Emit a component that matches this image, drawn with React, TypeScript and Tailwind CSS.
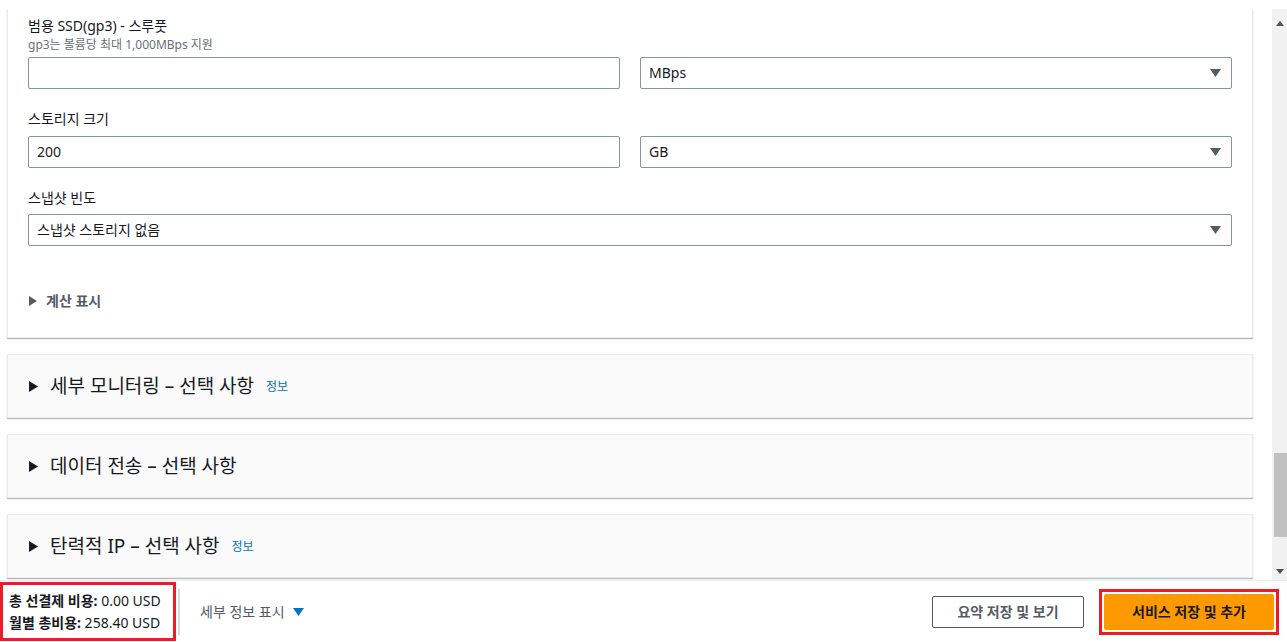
import React from 'react';

const font = { fontFamily: '"Noto Sans", "Noto Sans CJK KR", sans-serif' };

function Caret({ className = '' }: { className?: string }) {
  return (
    <svg width="11" height="8" viewBox="0 0 11 8" className={className}>
      <path d="M0 0 H11 L5.5 8 Z" fill="currentColor" />
    </svg>
  );
}

function RightTri({ className = '' }: { className?: string }) {
  return (
    <svg width="9" height="11" viewBox="0 0 9 11" className={className}>
      <path d="M0 0 L9 5.5 L0 11 Z" fill="currentColor" />
    </svg>
  );
}

function TextInput({ value = '' }: { value?: string }) {
  return (
    <div className="flex h-8 items-center rounded-[2px] border border-[#879596] bg-white px-2 text-sm text-[#16191f]">
      {value}
    </div>
  );
}

function Select({ value }: { value: string }) {
  return (
    <div className="flex h-8 items-center justify-between rounded-[2px] border border-[#879596] bg-white pl-2 pr-[10px] text-sm text-[#16191f]">
      <span>{value}</span>
      <Caret className="text-[#545b64]" />
    </div>
  );
}

function Section({ title, info }: { title: string; info?: boolean }) {
  return (
    <div className="mt-4 flex h-16 items-center border border-[#eaeded] bg-[#fafafa] pl-[21px] shadow-[0_1px_1px_0_rgba(0,28,36,0.3)]">
      <RightTri className="text-[#16191f]" />
      <span className="ml-3 text-[19px] text-[#16191f]">{title}</span>
      {info && <span className="ml-3 mt-[2px] text-xs text-[#0073bb]">정보</span>}
    </div>
  );
}

export default function App() {
  return (
    <div className="flex h-[642px] w-[1287px] flex-col overflow-hidden bg-white" style={font}>
      <div className="h-[9px] shrink-0" />
      <div className="flex h-[571px] shrink-0 overflow-hidden">
        <div className="flex-1 pl-[7px] pr-[19px]">
          <div className="border border-t-0 border-[#eaeded] bg-white px-5 pt-[7px] shadow-[0_1px_1px_0_rgba(0,28,36,0.3)]">
            <div className="text-sm leading-5 text-[#16191f]">범용 SSD(gp3) - 스루풋</div>
            <div className="mt-[1px] text-xs leading-4 text-[#687078]">gp3는 볼륨당 최대 1,000MBps 지원</div>
            <div className="mt-[4px] grid grid-cols-2 gap-5">
              <TextInput />
              <Select value="MBps" />
            </div>

            <div className="mt-5 text-sm leading-5 text-[#16191f]">스토리지 크기</div>
            <div className="mt-[7px] grid grid-cols-2 gap-5">
              <TextInput value="200" />
              <Select value="GB" />
            </div>

            <div className="mt-5 text-sm leading-5 text-[#16191f]">스냅샷 빈도</div>
            <div className="mt-[6px]">
              <Select value="스냅샷 스토리지 없음" />
            </div>

            <div className="mt-[45px] flex h-5 items-center text-sm font-bold text-[#545b64]">
              <RightTri className="ml-px h-[10px] w-[8px]" />
              <span className="ml-[9px]">계산 표시</span>
            </div>
            <div className="h-[26px]" />
          </div>

          <Section title="세부 모니터링 – 선택 사항" info />
          <Section title="데이터 전송 – 선택 사항" />
          <Section title="탄력적 IP – 선택 사항" info />
        </div>

        <div className="flex w-[15px] shrink-0 flex-col bg-[#f1f1f1]">
          <div className="flex h-[17px] items-end justify-center text-[#505050]">
            <svg width="8" height="5" viewBox="0 0 8 5"><path d="M0 5 L4 0 L8 5 Z" fill="currentColor" /></svg>
          </div>
          <div className="h-[427px]" />
          <div className="ml-[2px] h-[84px] w-[13px] bg-[#c1c1c1]" />
          <div className="flex-1" />
          <div className="flex h-[17px] items-start justify-center pt-[6px] text-[#505050]">
            <svg width="8" height="5" viewBox="0 0 8 5"><path d="M0 0 L8 0 L4 5 Z" fill="currentColor" /></svg>
          </div>
        </div>
      </div>

      <div className="flex h-[62px] shrink-0 items-center border-t border-[#eaeded] bg-white">
        <div className="flex h-[59px] w-[176px] flex-col justify-center border-[3px] border-[#ed1c24] pl-[6px] text-sm leading-[22px] text-[#16191f]">
          <div><span className="font-bold">총 선결제 비용:</span> 0.00 USD</div>
          <div><span className="font-bold">월별 총비용:</span> 258.40 USD</div>
        </div>
        <div className="ml-[2px] h-[46px] w-[2px] bg-[#d5dbdb]" />
        <div className="ml-5 flex items-center text-sm text-[#545b64]">
          <span>세부 정보 표시</span>
          <Caret className="ml-[8px] text-[#0073bb]" />
        </div>
        <div className="flex-1" />
        <div className="flex h-8 w-[152px] items-center justify-center rounded-[2px] border border-[#545b64] bg-white text-sm font-bold text-[#545b64]">
          요약 저장 및 보기
        </div>
        <div className="ml-[15px] mr-2 flex h-[46px] w-[180px] items-center justify-center border-[3px] border-[#ed1c24] bg-white p-[2px]">
          <div className="flex h-full w-full items-center justify-center rounded-[2px] bg-[#ff9900] text-sm font-bold text-[#16191f]">
            서비스 저장 및 추가
          </div>
        </div>
      </div>
    </div>
  );
}
